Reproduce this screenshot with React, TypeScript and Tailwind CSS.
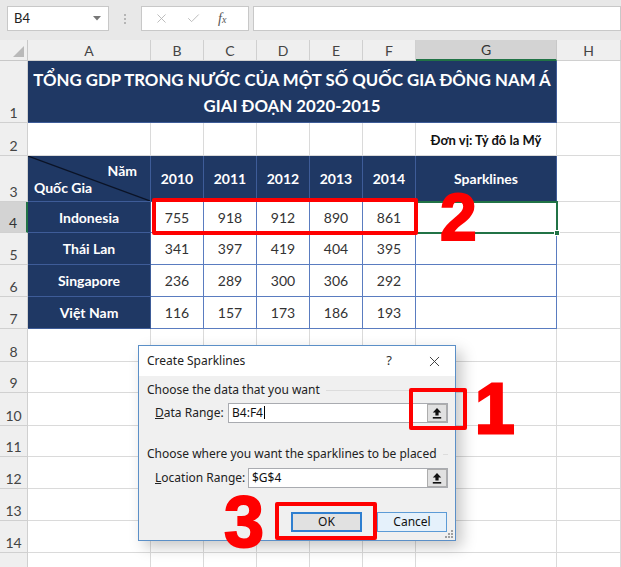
import { X, Check } from 'lucide-react'

const years = ['2010', '2011', '2012', '2013', '2014']

const data = [
  { name: 'Indonesia', values: [755, 918, 912, 890, 861] },
  { name: 'Thái Lan', values: [341, 397, 419, 404, 395] },
  { name: 'Singapore', values: [236, 289, 300, 306, 292] },
  { name: 'Việt Nam', values: [116, 157, 173, 186, 193] },
]

const rowHead =
  'bg-[#efefef] border-r border-b border-[#d0d0d0] text-[14px] text-[#444] flex items-end justify-center pb-[2px] leading-none'
const blank = 'bg-white border-r border-b border-[#dadada]'
const navy = 'bg-[#1f3864] border-r border-b border-[#3e5c98] text-white font-bold text-[14px] flex items-center justify-center'
const num = 'bg-white border-r border-b border-[#5a7cc0] text-[14px] text-[#333] flex items-center justify-center'

function UpArrow() {
  return (
    <svg width="10" height="12" viewBox="0 0 10 12">
      <path d="M5 1 L9.2 5.4 H6.6 V8.6 H3.4 V5.4 H0.8 Z" fill="#111" />
      <rect x="0.8" y="10" width="8.4" height="1.6" fill="#111" />
    </svg>
  )
}

function RangeInput({ value, caret }: { value: string; caret?: boolean }) {
  return (
    <div className="flex h-[20px] flex-1 items-center border border-[#a9abb0] bg-white">
      <span className="flex-1 pl-[3px] text-[12px] text-[#111]">
        {value}
        {caret && <span className="ml-[1px] inline-block h-[13px] w-px translate-y-[2px] bg-black" />}
      </span>
      <div className="flex h-[18px] w-[20px] items-center justify-center border border-[#adadad] bg-[#e1e1e1]">
        <UpArrow />
      </div>
    </div>
  )
}

function Dialog() {
  return (
    <div className="absolute left-[138px] top-[345px] flex h-[196px] w-[318px] flex-col border border-[#5b8fc7] bg-white font-['Noto_Sans',sans-serif] shadow-[6px_6px_14px_rgba(0,0,0,0.22)]">
      <div className="flex h-[30px] items-center pl-[8px] pr-[12px]">
        <span className="flex-1 text-[12px] text-[#222]">Create Sparklines</span>
        <span className="mr-[34px] text-[13px] text-[#333]">?</span>
        <X size={17} strokeWidth={1.3} className="text-[#333]" />
      </div>
      <div className="flex flex-1 flex-col bg-[#f0f0f0] pl-[8px] pr-[7px] pt-[6px]">
        <div className="flex h-[16px] items-center gap-[6px]">
          <span className="text-[12px] text-[#222]">Choose the data that you want</span>
          <div className="h-px flex-1 bg-[#dcdcdc]" />
        </div>
        <div className="mt-[5px] flex h-[20px] items-center">
          <span className="w-[81px] pl-[8px] text-[12px] text-[#222]">
            <span className="underline">D</span>ata Range:
          </span>
          <RangeInput value="B4:F4" caret />
        </div>
        <div className="mt-[23px] flex h-[16px] items-center gap-[6px]">
          <span className="text-[12px] text-[#222]">Choose where you want the sparklines to be placed</span>
          <div className="h-px flex-1 bg-[#dcdcdc]" />
        </div>
        <div className="mt-[6px] flex h-[20px] items-center">
          <span className="w-[101px] pl-[8px] text-[12px] text-[#222]">
            <span className="underline">L</span>ocation Range:
          </span>
          <RangeInput value="$G$4" />
        </div>
        <div className="mt-[24px] flex h-[20px] items-center justify-end gap-[15px] pr-[1px]">
          <button className="flex h-[20px] w-[71px] items-center justify-center border-2 border-[#2f7fd0] bg-[#e1e1e1] text-[12px] text-[#111]">
            OK
          </button>
          <button className="flex h-[20px] w-[70px] items-center justify-center border border-[#5c9bd6] bg-[#e5f1fb] text-[12px] text-[#111]">
            Cancel
          </button>
        </div>
      </div>
      <div className="absolute bottom-[2px] right-[2px] grid grid-cols-3 gap-[1px]">
        <span />
        <span />
        <span className="h-[2px] w-[2px] bg-[#a0a0a0]" />
        <span />
        <span className="h-[2px] w-[2px] bg-[#a0a0a0]" />
        <span className="h-[2px] w-[2px] bg-[#a0a0a0]" />
        <span className="h-[2px] w-[2px] bg-[#a0a0a0]" />
        <span className="h-[2px] w-[2px] bg-[#a0a0a0]" />
        <span className="h-[2px] w-[2px] bg-[#a0a0a0]" />
      </div>
    </div>
  )
}

export default function App() {
  const extraRows = [8, 9, 10, 11, 12, 13, 14, 15]
  const cols = ['A', 'B', 'C', 'D', 'E', 'F', 'G', 'H']

  return (
    <div className="relative h-[567px] w-[621px] overflow-hidden bg-white font-['Lato',sans-serif]">
      {/* formula bar */}
      <div className="flex h-[40px] items-start gap-0 bg-[#e8e8e8] pt-[6px]">
        <div className="ml-[7px] flex h-[25px] w-[102px] items-center border border-[#c8c8c8] bg-white pl-[6px] pr-[7px]">
          <span className="flex-1 text-[13px] text-[#222]">B4</span>
          <svg width="8" height="5" viewBox="0 0 8 5">
            <path d="M0 0 H8 L4 4.5 Z" fill="#777" />
          </svg>
        </div>
        <div className="flex h-[25px] w-[32px] flex-col items-center justify-center gap-[2px]">
          <span className="h-[2px] w-[2px] bg-[#b5b5b5]" />
          <span className="h-[2px] w-[2px] bg-[#b5b5b5]" />
          <span className="h-[2px] w-[2px] bg-[#b5b5b5]" />
        </div>
        <div className="flex h-[25px] w-[108px] items-center border border-[#c8c8c8] bg-white pl-[12px]">
          <X size={15} strokeWidth={1.4} className="text-[#b4b4b4]" />
          <Check size={15} strokeWidth={1.4} className="ml-[17px] text-[#b4b4b4]" />
          <span className="ml-[17px] font-['Liberation_Serif',serif] text-[14px] italic text-[#555]">
            f<span className="text-[10px]">x</span>
          </span>
        </div>
        <div className="ml-[4px] h-[25px] flex-1 border border-[#c8c8c8] bg-white" />
      </div>

      {/* sheet */}
      <div className="grid grid-cols-[28px_123px_53px_53px_53px_53px_53px_141px_64px] grid-rows-[21px_62px_33px_46px_31px_32px_32px_32px_33px_31px_33px_31px_32px_32px_32px_32px]">
        {/* column header */}
        <div className="relative border-r border-b border-[#c8c8c8] bg-[#efefef]">
          <svg className="absolute bottom-[3px] right-[3px]" width="11" height="11" viewBox="0 0 11 11">
            <path d="M11 0 V11 H0 Z" fill="#b9b9b9" />
          </svg>
        </div>
        {cols.map((c) =>
          c === 'G' ? (
            <div
              key={c}
              className="flex items-center justify-center border-r border-b-2 border-r-[#c8c8c8] border-b-[#217346] bg-[#d3d3d3] text-[14px] text-[#333]"
            >
              {c}
            </div>
          ) : (
            <div
              key={c}
              className="flex items-center justify-center border-r border-b border-[#d0d0d0] bg-[#efefef] text-[14px] text-[#444]"
            >
              {c}
            </div>
          ),
        )}

        {/* row 1 */}
        <div className={rowHead}>1</div>
        <div className="col-span-7 flex flex-col items-center justify-center whitespace-nowrap border-r border-b border-[#3e5c98] bg-[#1f3864] pt-[2px] text-[16.8px] font-bold leading-[26px] text-white">
          <span>TỔNG GDP TRONG NƯỚC CỦA MỘT SỐ QUỐC GIA ĐÔNG NAM Á</span>
          <span>GIAI ĐOẠN 2020-2015</span>
        </div>
        <div className={blank} />

        {/* row 2 */}
        <div className={rowHead}>2</div>
        <div className={blank} />
        <div className={blank} />
        <div className={blank} />
        <div className={blank} />
        <div className={blank} />
        <div className={blank} />
        <div className="flex items-end justify-center border-r border-b border-[#dadada] bg-white pb-[5px] text-[13px] font-bold text-[#111]">
          Đơn vị: Tỷ đô la Mỹ
        </div>
        <div className={blank} />

        {/* row 3 */}
        <div className={rowHead}>3</div>
        <div className="relative border-r border-b border-[#3e5c98] bg-[#1f3864] text-[14px] font-bold text-white">
          <svg className="absolute inset-0 h-full w-full" preserveAspectRatio="none" viewBox="0 0 100 100">
            <line x1="0" y1="0" x2="100" y2="100" stroke="#0b1326" strokeWidth="1.2" vectorEffect="non-scaling-stroke" />
          </svg>
          <span className="absolute right-[13px] top-[4px]">Năm</span>
          <span className="absolute bottom-[3px] left-[6px]">Quốc Gia</span>
        </div>
        {years.map((y) => (
          <div key={y} className={navy}>
            {y}
          </div>
        ))}
        <div className={navy}>Sparklines</div>
        <div className={blank} />

        {/* rows 4-7 */}
        {data.map((r, i) => (
          <div key={r.name} className="contents">
            {i === 0 ? (
              <div className="flex items-end justify-center border-r-2 border-b border-r-[#217346] border-b-[#d0d0d0] bg-[#d3d3d3] pb-[2px] text-[14px] leading-none text-[#333]">
                4
              </div>
            ) : (
              <div className={rowHead}>{i + 4}</div>
            )}
            <div className={navy}>{r.name}</div>
            {r.values.map((v, j) => (
              <div key={j} className={num}>
                {v}
              </div>
            ))}
            <div className="border-r border-b border-[#5a7cc0] bg-white" />
            <div className={blank} />
          </div>
        ))}

        {/* rows 8+ */}
        {extraRows.map((n) => (
          <div key={n} className="contents">
            <div className={rowHead}>{n < 15 ? n : ''}</div>
            {cols.map((c) => (
              <div key={c} className={blank} />
            ))}
          </div>
        ))}
      </div>

      {/* active cell G4 */}
      <div className="absolute left-[415px] top-[201px] h-[33px] w-[143px] border-2 border-[#217346]">
        <span className="absolute -bottom-[4px] -right-[4px] h-[6px] w-[6px] border border-white bg-[#217346]" />
      </div>

      <Dialog />

      {/* annotations */}
      <div className="absolute left-[152px] top-[198px] h-[37px] w-[266px] rounded-[2px] border-4 border-[#ff0000]" />
      <div className="absolute left-[409px] top-[388px] h-[42px] w-[58px] rounded-[2px] border-4 border-[#ff0000]" />
      <div className="absolute left-[275px] top-[502px] h-[38px] w-[102px] rounded-[2px] border-4 border-[#ff0000]" />
      <span className="absolute left-[440px] top-[193px] font-['Liberation_Sans',sans-serif] text-[66px] font-bold leading-[0.75] text-[#ff0000] [-webkit-text-stroke:2px_#ff0000]">
        2
      </span>
      <span className="absolute left-[475px] top-[382px] font-['Liberation_Sans',sans-serif] text-[71px] font-bold leading-[0.75] text-[#ff0000] [-webkit-text-stroke:3px_#ff0000]">
        1
      </span>
      <span className="absolute left-[224px] top-[495px] font-['Liberation_Sans',sans-serif] text-[72px] font-bold leading-[0.75] text-[#ff0000] [-webkit-text-stroke:2px_#ff0000]">
        3
      </span>
    </div>
  )
}
